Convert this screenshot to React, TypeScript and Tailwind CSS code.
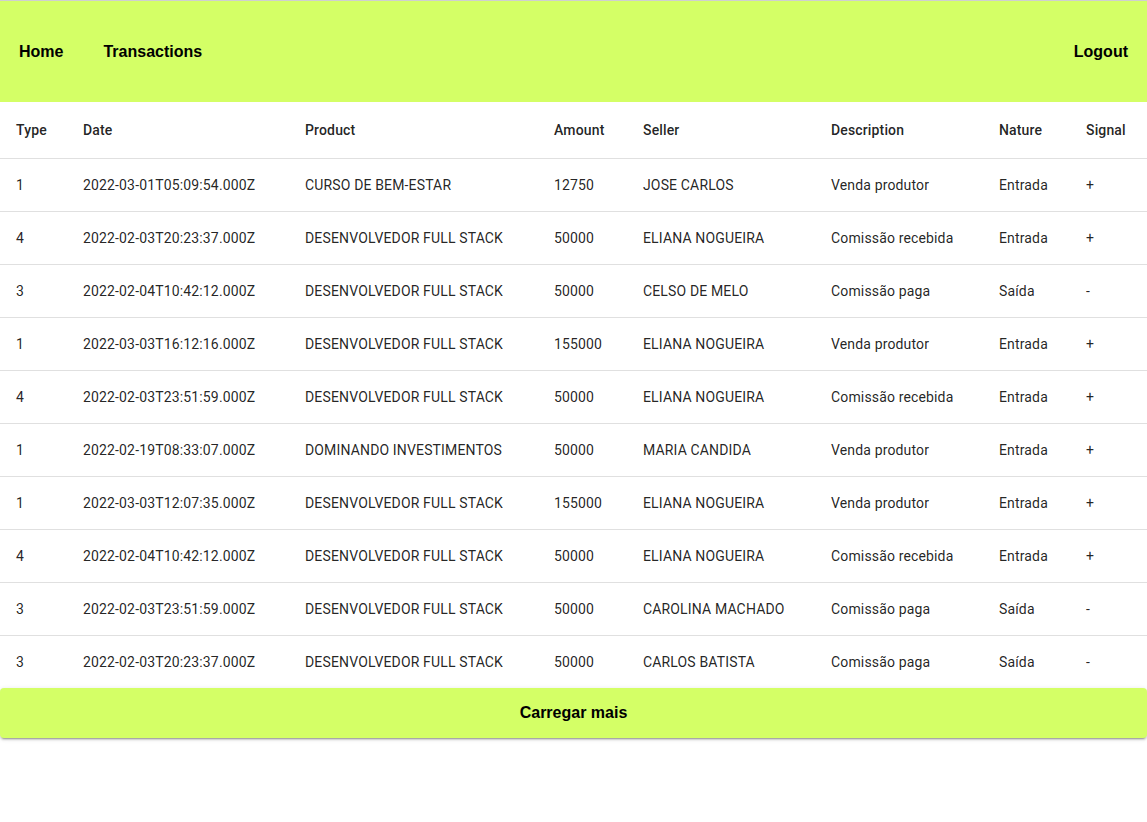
import React from 'react';

interface Transaction {
  type: number;
  date: string;
  product: string;
  amount: number;
  seller: string;
  description: string;
  nature: string;
  signal: string;
}

const rows: Transaction[] = [
  { type: 1, date: '2022-03-01T05:09:54.000Z', product: 'CURSO DE BEM-ESTAR', amount: 12750, seller: 'JOSE CARLOS', description: 'Venda produtor', nature: 'Entrada', signal: '+' },
  { type: 4, date: '2022-02-03T20:23:37.000Z', product: 'DESENVOLVEDOR FULL STACK', amount: 50000, seller: 'ELIANA NOGUEIRA', description: 'Comissão recebida', nature: 'Entrada', signal: '+' },
  { type: 3, date: '2022-02-04T10:42:12.000Z', product: 'DESENVOLVEDOR FULL STACK', amount: 50000, seller: 'CELSO DE MELO', description: 'Comissão paga', nature: 'Saída', signal: '-' },
  { type: 1, date: '2022-03-03T16:12:16.000Z', product: 'DESENVOLVEDOR FULL STACK', amount: 155000, seller: 'ELIANA NOGUEIRA', description: 'Venda produtor', nature: 'Entrada', signal: '+' },
  { type: 4, date: '2022-02-03T23:51:59.000Z', product: 'DESENVOLVEDOR FULL STACK', amount: 50000, seller: 'ELIANA NOGUEIRA', description: 'Comissão recebida', nature: 'Entrada', signal: '+' },
  { type: 1, date: '2022-02-19T08:33:07.000Z', product: 'DOMINANDO INVESTIMENTOS', amount: 50000, seller: 'MARIA CANDIDA', description: 'Venda produtor', nature: 'Entrada', signal: '+' },
  { type: 1, date: '2022-03-03T12:07:35.000Z', product: 'DESENVOLVEDOR FULL STACK', amount: 155000, seller: 'ELIANA NOGUEIRA', description: 'Venda produtor', nature: 'Entrada', signal: '+' },
  { type: 4, date: '2022-02-04T10:42:12.000Z', product: 'DESENVOLVEDOR FULL STACK', amount: 50000, seller: 'ELIANA NOGUEIRA', description: 'Comissão recebida', nature: 'Entrada', signal: '+' },
  { type: 3, date: '2022-02-03T23:51:59.000Z', product: 'DESENVOLVEDOR FULL STACK', amount: 50000, seller: 'CAROLINA MACHADO', description: 'Comissão paga', nature: 'Saída', signal: '-' },
  { type: 3, date: '2022-02-03T20:23:37.000Z', product: 'DESENVOLVEDOR FULL STACK', amount: 50000, seller: 'CARLOS BATISTA', description: 'Comissão paga', nature: 'Saída', signal: '-' },
];

const headers = ['Type', 'Date', 'Product', 'Amount', 'Seller', 'Description', 'Nature', 'Signal'];
const widths = ['w-[67px]', 'w-[222px]', 'w-[249px]', 'w-[89px]', 'w-[188px]', 'w-[168px]', 'w-[87px]', 'w-[77px]'];

export default function App() {
  return (
    <div className="min-h-screen bg-white">
      <header className="flex h-[102px] items-center justify-between border-t border-[#cfcfcf] bg-[#d4ff66] px-[19px] font-['Liberation_Sans',Arial,sans-serif] text-base font-bold text-black">
        <nav className="flex items-center gap-[40px]">
          <a>Home</a>
          <a>Transactions</a>
        </nav>
        <a>Logout</a>
      </header>

      <table className="w-full table-fixed border-collapse font-['Roboto',sans-serif] text-sm tracking-[0.01071em] text-[rgba(0,0,0,0.87)]">
        <colgroup>
          {widths.map((w, i) => (
            <col key={i} className={w} />
          ))}
        </colgroup>
        <thead>
          <tr className="border-b border-[#e0e0e0]">
            {headers.map((h) => (
              <th key={h} className="p-4 text-left font-medium leading-6">
                {h}
              </th>
            ))}
          </tr>
        </thead>
        <tbody>
          {rows.map((r, i) => (
            <tr key={i} className={i < rows.length - 1 ? 'border-b border-[#e0e0e0]' : ''}>
              <td className="p-4 leading-5">{r.type}</td>
              <td className="p-4 leading-5">{r.date}</td>
              <td className="p-4 leading-5 whitespace-nowrap">{r.product}</td>
              <td className="p-4 leading-5">{r.amount}</td>
              <td className="p-4 leading-5 whitespace-nowrap">{r.seller}</td>
              <td className="p-4 leading-5 whitespace-nowrap">{r.description}</td>
              <td className="p-4 leading-5">{r.nature}</td>
              <td className="p-4 leading-5">{r.signal}</td>
            </tr>
          ))}
        </tbody>
      </table>

      <button className="flex h-[50px] w-full items-center justify-center rounded bg-[#d4ff66] font-['Liberation_Sans',Arial,sans-serif] text-base font-bold text-black shadow-[0_3px_1px_-2px_rgba(0,0,0,0.2),0_2px_2px_0_rgba(0,0,0,0.14),0_1px_5px_0_rgba(0,0,0,0.12)]">
        Carregar mais
      </button>
    </div>
  );
}
